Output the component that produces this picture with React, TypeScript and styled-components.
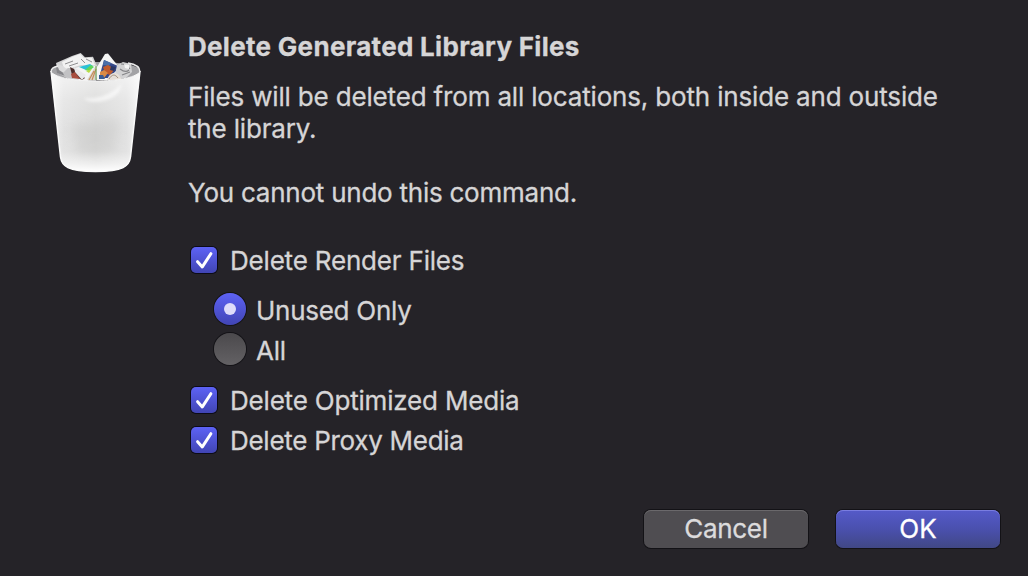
import React, { useState } from 'react';
import styled, { createGlobalStyle } from 'styled-components';

const GlobalStyle = createGlobalStyle`
  body {
    margin: 0;
    background: #252328;
  }
  * {
    box-sizing: border-box;
  }
`;

const TrashIcon = (): JSX.Element => (
  <svg width="96" height="124" viewBox="0 0 96 124" aria-hidden="true">
    <defs>
      <linearGradient id="bin" x1="0" x2="1" y1="0" y2="0">
        <stop offset="0" stopColor="#f2f2f2" />
        <stop offset="0.14" stopColor="#dedede" />
        <stop offset="0.5" stopColor="#d2d2d1" />
        <stop offset="0.85" stopColor="#dedede" />
        <stop offset="1" stopColor="#f4f4f4" />
      </linearGradient>
      <linearGradient id="shine" x1="0" x2="0" y1="0" y2="1">
        <stop offset="0" stopColor="#fff" stopOpacity="0.65" />
        <stop offset="0.28" stopColor="#fff" stopOpacity="0.3" />
        <stop offset="0.6" stopColor="#fff" stopOpacity="0.1" />
        <stop offset="0.8" stopColor="#fff" stopOpacity="0.15" />
        <stop offset="0.92" stopColor="#fff" stopOpacity="0.6" />
        <stop offset="1" stopColor="#fff" />
      </linearGradient>
      <filter id="soft" x="-30%" y="-30%" width="160%" height="160%">
        <feGaussianBlur stdDeviation="1.4" />
      </filter>
      <filter id="haze" x="-50%" y="-50%" width="200%" height="200%">
        <feGaussianBlur stdDeviation="4" />
      </filter>
    </defs>
    <path d="M3 19c0-6 17-9 44-9s44 3 45 9c-1 6-20 9-44 9S4 25 3 19z" fill="#a3a3a6" />
    {/* crumpled paper */}
    <path d="M8 11l16-7 8.700-3 4.300 4.300 8-.6 3 7 3 5-3 12H24L10 21z" fill="#d3d3d4" />
    <path d="M14 10l10-5 8-3 4 4 8 0 3 7-14 0-10 3-7 1z" fill="#f2f2f2" />
    <path d="M17 12l8-3M21 14l9-3M33 7l4 4M38 7l6 3" stroke="#8e8e90" strokeWidth="1" fill="none" />
    <path d="M8 15l6 1 5 5-2 3-8-3z" fill="#86868a" />
    <path d="M9 12l6 2 6 5-4 3-6-4z" fill="#dcdcdd" />
    <path d="M15 21l5-5 4 0 1 11-8-2z" fill="#c2c2c4" />
    <path d="M27 16l12-3 9 1-8 15h-9z" fill="#f4f4f5" />
    <path d="M22 15l4 2 11 9-3 2-10-5z" fill="#4c2c2a" />
    <path d="M23 22l4-2 5 7-8-1z" fill="#a84c3d" />
    <path d="M26 15l12 8-4 5-7-8z" fill="#e9e9ea" />
    <path d="M31 15l11-3 3 2-7 4z" fill="#2bc1d8" />
    <path d="M37 18l6-5 3 2-5 4z" fill="#5ed65c" />
    <path d="M38 19l6-2-3 4z" fill="#b8dc45" />
    <path d="M39 28l8-13 2 0-2 13z" fill="#d9d3ca" />
    <path d="M41 28l5-9M44 28l4-11" stroke="#c58a55" strokeWidth="1.100" />
    <path d="M48 28V14" stroke="#6aa34f" strokeWidth="1" />
    <path d="M49 15l8-13 3-0.500 10 12.500-3 14H49z" fill="#f5f5f5" />
    <path d="M56 8l14 6-2 5-8 7-9 0z" fill="#33488a" />
    <path d="M56 8l7 3-2 3-6-1z" fill="#4a6fa8" />
    <path d="M55 15l5-2 7 4-5 6-5-2z" fill="#c05a2c" />
    <path d="M52 20l4-2 4 3-4 5-4-1z" fill="#d88a45" />
    <path d="M63 14l5 1-2 4-4-1z" fill="#2a3763" />
    <path d="M51 23l4 0 2 4-6 0z" fill="#3a5c93" />
    <path d="M69 13l6-3 8 2 1 8-6 6-12 2z" fill="#d2d2d3" />
    <path d="M73 12c4 0 7 2 9 5M72 17c4 3 7 3 9 1M74 23l8-3" stroke="#858588" strokeWidth="1.1" fill="none" />
    <path d="M76 12l5 1 0 4-4-1z" fill="#f4f4f4" />
    <path d="M59 28c2-7 8-9 12-5l3 5z" fill="#e6dfd7" />
    <path d="M61 27c3-5 6-5 9-1" stroke="#a2907f" fill="none" />
    {/* bin body */}
    <path
      d="M3 20c6 6 24 9 45 9s38-3 44-9l-9.500 85c-1.200 9-7 14.500-35 14.500S14 114 12.500 105z"
      fill="url(#bin)"
    />
    <path
      d="M3 20c6 6 24 9 45 9s38-3 44-9l-9.500 85c-1.200 9-7 14.500-35 14.500S14 114 12.500 105z"
      fill="url(#shine)"
    />
    <path d="M36 46c15 1 27-3 37-14 1 9-10 17-24 18-7 0-11-1-13-4z" fill="#fff" opacity="0.6" filter="url(#soft)" />
    <path d="M24 74c12-8 20 2 28-4s16-4 20 0l-6 30-36 2z" fill="#bfbfbe" opacity="0.25" filter="url(#haze)" />
    <path
      d="M3 19l9.500 86c1.200 9 7 14.500 35 14.500S81.300 114 82.500 105L92 19"
      fill="none"
      stroke="#fafafa"
      strokeWidth="1.500"
    />
    <path d="M3 20c6 6 24 9 45 9s38-3 44-9" fill="none" stroke="#f4f4f4" strokeWidth="1" />
    <path d="M3 20c0-4 3-5 7-6M80 11c7 1 12 4 12 9" fill="none" stroke="#ececec" strokeWidth="1.400" />
  </svg>
);

interface OptionProps {
  label: string;
  spacing?: string;
  checked: boolean;
  onChange: () => void;
}

const CheckOption = ({ label, spacing, checked, onChange }: OptionProps): JSX.Element => (
  <Option>
    <HiddenInput type="checkbox" checked={checked} onChange={onChange} />
    <CheckBox $checked={checked}>
      {checked && (
        <svg width="26" height="26" viewBox="0 0 26 26">
          <path
            d="M6.600 14.700l4.700 5.200L19.900 6.700"
            fill="none"
            stroke="#fff"
            strokeWidth="3"
            strokeLinecap="round"
            strokeLinejoin="round"
          />
        </svg>
      )}
    </CheckBox>
    <Label $spacing={spacing}>{label}</Label>
  </Option>
);

const RadioOption = ({ label, spacing, checked, onChange }: OptionProps): JSX.Element => (
  <Option>
    <HiddenInput type="radio" name="render-files" checked={checked} onChange={onChange} />
    <RadioCircle $checked={checked}>{checked && <RadioDot />}</RadioCircle>
    <Label $spacing={spacing}>{label}</Label>
  </Option>
);

const App = (): JSX.Element => {
  const [renderFiles, setRenderFiles] = useState(true);
  const [scope, setScope] = useState('unused');
  const [optimized, setOptimized] = useState(true);
  const [proxy, setProxy] = useState(true);

  return (
    <Dialog role="dialog">
      <GlobalStyle />
      <IconColumn>
        <TrashIcon />
      </IconColumn>
      <Content>
        <Title>Delete Generated Library Files</Title>
        <Message $spacing="-0.165px">
          Files will be deleted from all locations, both inside and outside
          <br />
          the library.
        </Message>
        <Message $spacing="-0.24px">You cannot undo this command.</Message>
        <Options>
          <CheckOption label="Delete Render Files" checked={renderFiles} onChange={() => setRenderFiles(!renderFiles)} />
          <RadioGroup>
            <RadioOption
              label="Unused Only"
              spacing="-0.27px"
              checked={scope === 'unused'}
              onChange={() => setScope('unused')}
            />
            <RadioOption label="All" checked={scope === 'all'} onChange={() => setScope('all')} />
          </RadioGroup>
          <CheckOption label="Delete Optimized Media" checked={optimized} onChange={() => setOptimized(!optimized)} />
          <CheckOption label="Delete Proxy Media" spacing="-0.28px" checked={proxy} onChange={() => setProxy(!proxy)} />
        </Options>
        <Actions>
          <Button>Cancel</Button>
          <Button $primary>OK</Button>
        </Actions>
      </Content>
    </Dialog>
  );
};

const Dialog = styled.div`
  display: flex;
  width: 1028px;
  height: 576px;
  overflow: hidden;
  background: #252328;
  color: #d6d5d6;
  font: 400 26px/32px Inter, 'Liberation Sans', sans-serif;
  -webkit-text-stroke: 0.3px;
`;

const IconColumn = styled.div`
  flex: none;
  width: 188px;
  padding: 52px 0 0 48px;
`;

const Content = styled.div`
  display: flex;
  flex: 1;
  flex-direction: column;
  padding: 31px 28px 28px 0;
`;

const Title = styled.h1`
  margin: 0 0 18px;
  font-size: 26px;
  font-weight: 700;
  line-height: 32px;
  letter-spacing: 0.3px;
  white-space: nowrap;
`;

const Message = styled.p<{ $spacing: string }>`
  margin: 0 0 32px;
  letter-spacing: ${({ $spacing }) => $spacing};
  white-space: nowrap;
`;

const Options = styled.div`
  display: flex;
  flex-direction: column;
  margin-top: -1px;
  padding-left: 3px;
`;

const RadioGroup = styled.div`
  margin: 10px 0;
  padding-left: 23px;
`;

const Option = styled.label`
  display: flex;
  align-items: center;
  height: 40px;
`;

const HiddenInput = styled.input`
  position: absolute;
  opacity: 0;
  pointer-events: none;
`;

const CheckBox = styled.span<{ $checked: boolean }>`
  flex: none;
  width: 26px;
  height: 26px;
  margin-right: 13px;
  border-radius: 5px;
  background: ${({ $checked }) =>
    $checked ? 'linear-gradient(#5d62f5, #4145b4)' : 'linear-gradient(#4b494c, #636164)'};
  box-shadow: 0 0 0 1px #0c0b18;

  svg {
    display: block;
  }
`;

const RadioCircle = styled.span<{ $checked: boolean }>`
  display: flex;
  flex: none;
  align-items: center;
  justify-content: center;
  width: 32px;
  height: 32px;
  margin: 0 10px 2px 0;
  border-radius: 50%;
  background: ${({ $checked }) =>
    $checked ? 'linear-gradient(#5d62f5, #4145b4)' : 'linear-gradient(#4b494c, #636164)'};
  box-shadow: 0 0 0 1px #141317;
`;

const RadioDot = styled.span`
  width: 12px;
  height: 12px;
  border-radius: 50%;
  background: #dedcfa;
`;

const Label = styled.span<{ $spacing?: string }>`
  padding-top: 2px;
  letter-spacing: ${({ $spacing }) => $spacing || '-0.19px'};
  white-space: nowrap;
`;

const Actions = styled.div`
  display: flex;
  gap: 28px;
  justify-content: flex-end;
  margin-top: auto;
`;

const Button = styled.button<{ $primary?: boolean }>`
  width: 164px;
  height: 38px;
  padding: 0;
  border: 0;
  border-radius: 7px;
  background: ${({ $primary }) => ($primary ? 'linear-gradient(#555ac9, #4a50ae 50%, #414885)' : '#4f4d51')};
  box-shadow: 0 0 0 1px #131216, inset 0 1px 0 ${({ $primary }) => ($primary ? '#7a7de0' : '#6a686b')};
  color: ${({ $primary }) => ($primary ? '#fff' : '#dcdbdc')};
  font: inherit;
  letter-spacing: ${({ $primary }) => ($primary ? '0' : '-0.3px')};
`;

export default App;
